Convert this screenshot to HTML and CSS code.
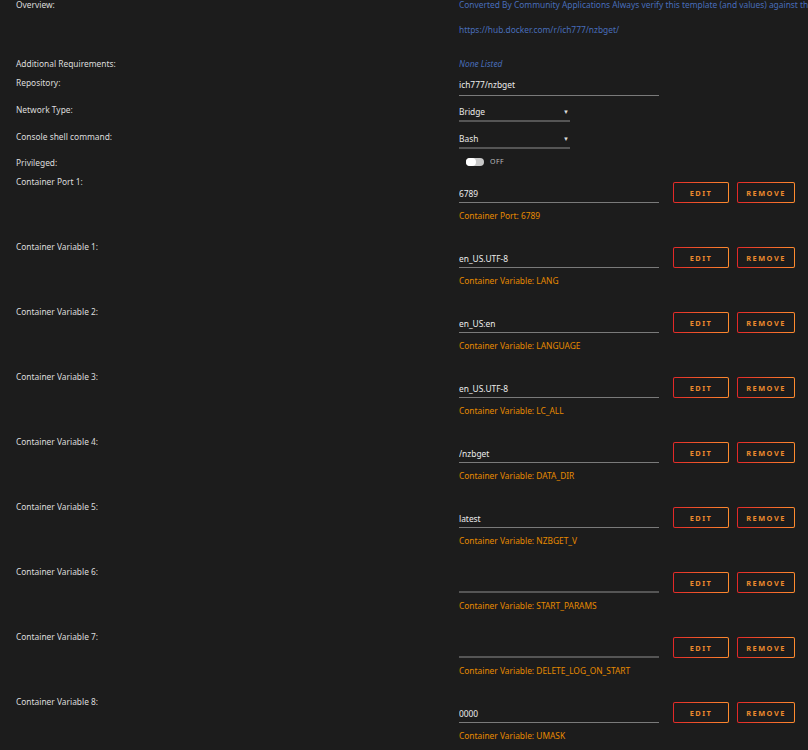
FILE: index.html
```html
<!DOCTYPE html>
<html lang="en">
<head>
  <meta charset="UTF-8">
  <meta name="viewport" content="width=device-width, initial-scale=1.0">
  <title>Update Container</title>
<link rel="stylesheet" href="styles.css">
</head>
<body>
<div class="template">
  <div class="row overview">
    <div class="label">Overview:</div>
    <div class="value">
      <div class="blurb">Converted By Community Applications Always verify this template (and values) against the support page for the container</div>
      <div class="link">https://hub.docker.com/r/ich777/nzbget/</div>
    </div>
  </div>
  <div class="row req">
    <div class="label">Additional Requirements:</div>
    <div class="value"><span class="none">None Listed</span></div>
  </div>
  <div class="row repo">
    <div class="label">Repository:</div>
    <div class="value"><div class="textbox">ich777/nzbget</div></div>
  </div>
  <div class="row pick">
    <div class="label">Network Type:</div>
    <div class="value"><div class="select">Bridge<span class="caret">&#9660;</span></div></div>
  </div>
  <div class="row pick">
    <div class="label">Console shell command:</div>
    <div class="value"><div class="select">Bash<span class="caret">&#9660;</span></div></div>
  </div>
  <div class="row priv">
    <div class="label">Privileged:</div>
    <div class="value">
      <span class="switch"><span class="knob"></span></span>
      <span class="switch-text">OFF</span>
    </div>
  </div>

  <div class="row config">
    <div class="label">Container Port 1:</div>
    <div class="value">
      <div class="line">
        <div class="textbox">6789</div>
        <button class="btn edit">EDIT</button>
        <button class="btn remove">REMOVE</button>
      </div>
      <div class="desc">Container Port: 6789</div>
    </div>
  </div>
  <div class="row config">
    <div class="label">Container Variable 1:</div>
    <div class="value">
      <div class="line">
        <div class="textbox">en_US.UTF-8</div>
        <button class="btn edit">EDIT</button>
        <button class="btn remove">REMOVE</button>
      </div>
      <div class="desc">Container Variable: LANG</div>
    </div>
  </div>
  <div class="row config">
    <div class="label">Container Variable 2:</div>
    <div class="value">
      <div class="line">
        <div class="textbox">en_US:en</div>
        <button class="btn edit">EDIT</button>
        <button class="btn remove">REMOVE</button>
      </div>
      <div class="desc">Container Variable: LANGUAGE</div>
    </div>
  </div>
  <div class="row config">
    <div class="label">Container Variable 3:</div>
    <div class="value">
      <div class="line">
        <div class="textbox">en_US.UTF-8</div>
        <button class="btn edit">EDIT</button>
        <button class="btn remove">REMOVE</button>
      </div>
      <div class="desc">Container Variable: LC_ALL</div>
    </div>
  </div>
  <div class="row config">
    <div class="label">Container Variable 4:</div>
    <div class="value">
      <div class="line">
        <div class="textbox">/nzbget</div>
        <button class="btn edit">EDIT</button>
        <button class="btn remove">REMOVE</button>
      </div>
      <div class="desc">Container Variable: DATA_DIR</div>
    </div>
  </div>
  <div class="row config">
    <div class="label">Container Variable 5:</div>
    <div class="value">
      <div class="line">
        <div class="textbox">latest</div>
        <button class="btn edit">EDIT</button>
        <button class="btn remove">REMOVE</button>
      </div>
      <div class="desc">Container Variable: NZBGET_V</div>
    </div>
  </div>
  <div class="row config">
    <div class="label">Container Variable 6:</div>
    <div class="value">
      <div class="line">
        <div class="textbox empty"></div>
        <button class="btn edit">EDIT</button>
        <button class="btn remove">REMOVE</button>
      </div>
      <div class="desc">Container Variable: START_PARAMS</div>
    </div>
  </div>
  <div class="row config">
    <div class="label">Container Variable 7:</div>
    <div class="value">
      <div class="line">
        <div class="textbox empty"></div>
        <button class="btn edit">EDIT</button>
        <button class="btn remove">REMOVE</button>
      </div>
      <div class="desc">Container Variable: DELETE_LOG_ON_START</div>
    </div>
  </div>
  <div class="row config">
    <div class="label">Container Variable 8:</div>
    <div class="value">
      <div class="line">
        <div class="textbox">0000</div>
        <button class="btn edit">EDIT</button>
        <button class="btn remove">REMOVE</button>
      </div>
      <div class="desc">Container Variable: UMASK</div>
    </div>
  </div>
</div>
</body>
</html>
```
FILE: styles.css
```css
body {
  margin: 0;
  padding: 0;
  background: #1c1c1c;
  color: #e8e8e8;
  font-family: "Noto Sans", "Open Sans", sans-serif;
  font-size: 8.4px;
  overflow: hidden;
}
.template {
  padding-left: 16px;
  margin-top: -1px;
}
.row {
  display: grid;
  grid-template-columns: 443px 1fr;
  line-height: 12px;
}
.label {
  color: #dcdcdc;
}
.value {
  white-space: nowrap;
  overflow: hidden;
}
.overview {
  height: 59px;
}
.blurb,
.link {
  color: #486dba;
}
.link {
  margin-top: 13px;
}
.req {
  height: 19px;
}
.none {
  color: #486dba;
  font-style: italic;
}
.repo {
  height: 27px;
}
.textbox {
  width: 200px;
  height: 19px;
  padding-top: 2px;
  box-sizing: border-box;
  border-bottom: 1px solid #7a7a7a;
  color: #ececec;
}
.pick {
  height: 26.5px;
}
.select {
  display: flex;
  justify-content: space-between;
  width: 111px;
  height: 18px;
  padding-top: 2px;
  box-sizing: border-box;
  border-bottom: 2px solid #555;
}
.caret {
  font-size: 6px;
  color: #ddd;
  padding-right: 1px;
}
.priv {
  height: 19px;
}
.priv .value {
  display: flex;
  align-items: center;
  gap: 6px;
  padding-left: 7px;
  height: 10px;
}
.switch {
  display: inline-flex;
  width: 18px;
  height: 8px;
  border-radius: 4px;
  background: #c8c8c8;
}
.knob {
  width: 10px;
  height: 8px;
  border-radius: 4px;
  background: #fff;
}
.switch-text {
  font-size: 7px;
  color: #bbb;
  letter-spacing: 0.5px;
}
.config {
  height: 65px;
}
.config .value {
  padding-top: 6px;
}
.line {
  display: flex;
  align-items: flex-end;
}
.config .textbox {
  height: 20px;
  padding-top: 5px;
}
.config .textbox.empty {
  border-bottom: 2px solid #555;
}
.btn {
  height: 21px;
  margin-left: 14px;
  padding: 0;
  border: 1px solid transparent;
  border-radius: 2px;
  background: linear-gradient(#1c1c1c, #1c1c1c) padding-box, linear-gradient(90deg, #e22828, #ff8c2f) border-box;
  color: #ec8a2e;
  font-family: "Noto Sans", sans-serif;
  font-size: 7.4px;
  font-weight: bold;
  letter-spacing: 1.5px;
  text-align: center;
}
.edit {
  width: 56px;
}
.remove {
  width: 58px;
  margin-left: 8px;
}
.desc {
  margin-top: 7px;
  color: #e68a00;
}
```
